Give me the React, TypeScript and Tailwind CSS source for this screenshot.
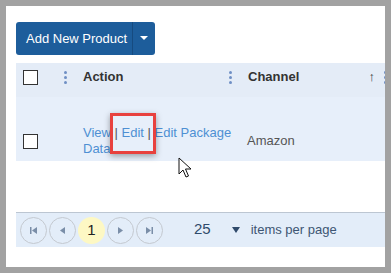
import React from "react";

function Dots() {
  return (
    <div className="flex flex-col gap-[2px] items-center w-[3px]">
      <span className="w-[3px] h-[3px] rounded-full bg-[#6f8fc4]" />
      <span className="w-[3px] h-[3px] rounded-full bg-[#6f8fc4]" />
      <span className="w-[3px] h-[3px] rounded-full bg-[#6f8fc4]" />
    </div>
  );
}

function PagerBtn({ children }: { children: React.ReactNode }) {
  return (
    <div className="w-[27px] h-[27px] rounded-full border border-[#c4c9d0] flex items-center justify-center text-[#6b7f99]">
      {children}
    </div>
  );
}

export default function App() {
  return (
    <div
      className="w-[391px] h-[273px] bg-[#a2a2a2] pt-[6px] pl-[6px] pr-[6px] pb-[6px]"
      style={{ fontFamily: '"Liberation Sans", Arial, sans-serif' }}
    >
      <div className="relative w-full h-full bg-white overflow-hidden pl-[10px]">
        {/* Button */}
        <div className="mt-[16px] flex w-[139px] h-[33px] rounded-[3px] bg-[#1d5d9b] text-white">
          <div className="flex items-center pl-[10px] w-[117px] text-[13px] whitespace-nowrap border-r border-[#164b80]">
            Add New Product
          </div>
          <div className="flex-1 flex items-center justify-center">
            <svg width="8" height="5" viewBox="0 0 8 5">
              <path d="M0 0 L8 0 L4 4 Z" fill="#ffffff" />
            </svg>
          </div>
        </div>

        {/* Table */}
        <div className="mt-[8px] w-[371px]">
          {/* Header */}
          <div className="flex items-center h-[34px] pb-[6px] bg-[#e4ecf7] text-[13px] font-bold text-[#333333]">
            <div className="w-[48px] flex justify-start pl-[7px]">
              <div className="w-[15px] h-[15px] border border-[#333] bg-white" />
            </div>
            <Dots />
            <div className="ml-[16px] w-[146px]">Action</div>
            <Dots />
            <div className="ml-[16px] flex-1">Channel</div>
            <div className="text-[#333] font-normal text-[13px] mr-[9px]">↑</div>
            <Dots />
          </div>
          {/* Row */}
          <div className="flex items-center h-[64px] pt-[24px] bg-[#e7effa] text-[13px]">
            <div className="w-[48px] flex justify-start pl-[7px]">
              <div className="w-[15px] h-[15px] border border-[#333] bg-white" />
            </div>
            <div className="ml-[19px] w-[164px] text-[#4e8fd3] leading-[16px]">
              View<span className="text-[#555]"> | </span>Edit<span className="text-[#555]"> | </span>Edit Package Data
            </div>
            <div className="text-[#555]">Amazon</div>
          </div>
          {/* empty area */}
          <div className="h-[51px] bg-white" />
          {/* Pager */}
          <div className="flex items-center h-[35px] bg-[#e3edf9] border-t border-[#bcc6d2] pl-[4px] text-[13px]">
            <div className="flex items-center gap-[2px]">
              <PagerBtn>
                <svg width="7" height="7" viewBox="0 0 7 7">
                  <rect x="0" y="0" width="1.5" height="7" fill="#7a8ea8" />
                  <path d="M7 0 L2 3.5 L7 7 Z" fill="#7a8ea8" />
                </svg>
              </PagerBtn>
              <PagerBtn>
                <svg width="5" height="7" viewBox="0 0 5 7">
                  <path d="M5 0 L0 3.5 L5 7 Z" fill="#7a8ea8" />
                </svg>
              </PagerBtn>
              <div className="w-[27px] h-[27px] rounded-full bg-[#fdf8c4] flex items-center justify-center text-[#222] text-[15px]">
                1
              </div>
              <PagerBtn>
                <svg width="5" height="7" viewBox="0 0 5 7">
                  <path d="M0 0 L5 3.5 L0 7 Z" fill="#7a8ea8" />
                </svg>
              </PagerBtn>
              <PagerBtn>
                <svg width="7" height="7" viewBox="0 0 7 7">
                  <path d="M0 0 L5 3.5 L0 7 Z" fill="#7a8ea8" />
                  <rect x="5.5" y="0" width="1.5" height="7" fill="#7a8ea8" />
                </svg>
              </PagerBtn>
            </div>
            <div className="ml-[31px] text-[#2f4a6b] text-[15px] -mt-[2px]">25</div>
            <div className="ml-[21px]">
              <svg width="8" height="6" viewBox="0 0 8 6">
                <path d="M0 0 L8 0 L4 6 Z" fill="#2f4a6b" />
              </svg>
            </div>
            <div className="ml-[11px] text-[#3d5573]">items per page</div>
          </div>
        </div>

        {/* Red highlight box */}
        <div className="absolute left-[104px] top-[107px] w-[46px] h-[41px] border-[3px] border-[#e8413e] shadow-[0_2px_6px_rgba(0,0,0,0.35)]" />

        {/* Cursor */}
        <svg
          className="absolute left-[172px] top-[151px]"
          width="14"
          height="22"
          viewBox="0 0 14 22"
        >
          <path
            d="M1 1 L1 17 L5 13 L8 20 L10.5 19 L7.5 12 L13 12 Z"
            fill="#ffffff"
            stroke="#111111"
            strokeWidth="1"
            strokeLinejoin="round"
          />
        </svg>
      </div>
    </div>
  );
}
